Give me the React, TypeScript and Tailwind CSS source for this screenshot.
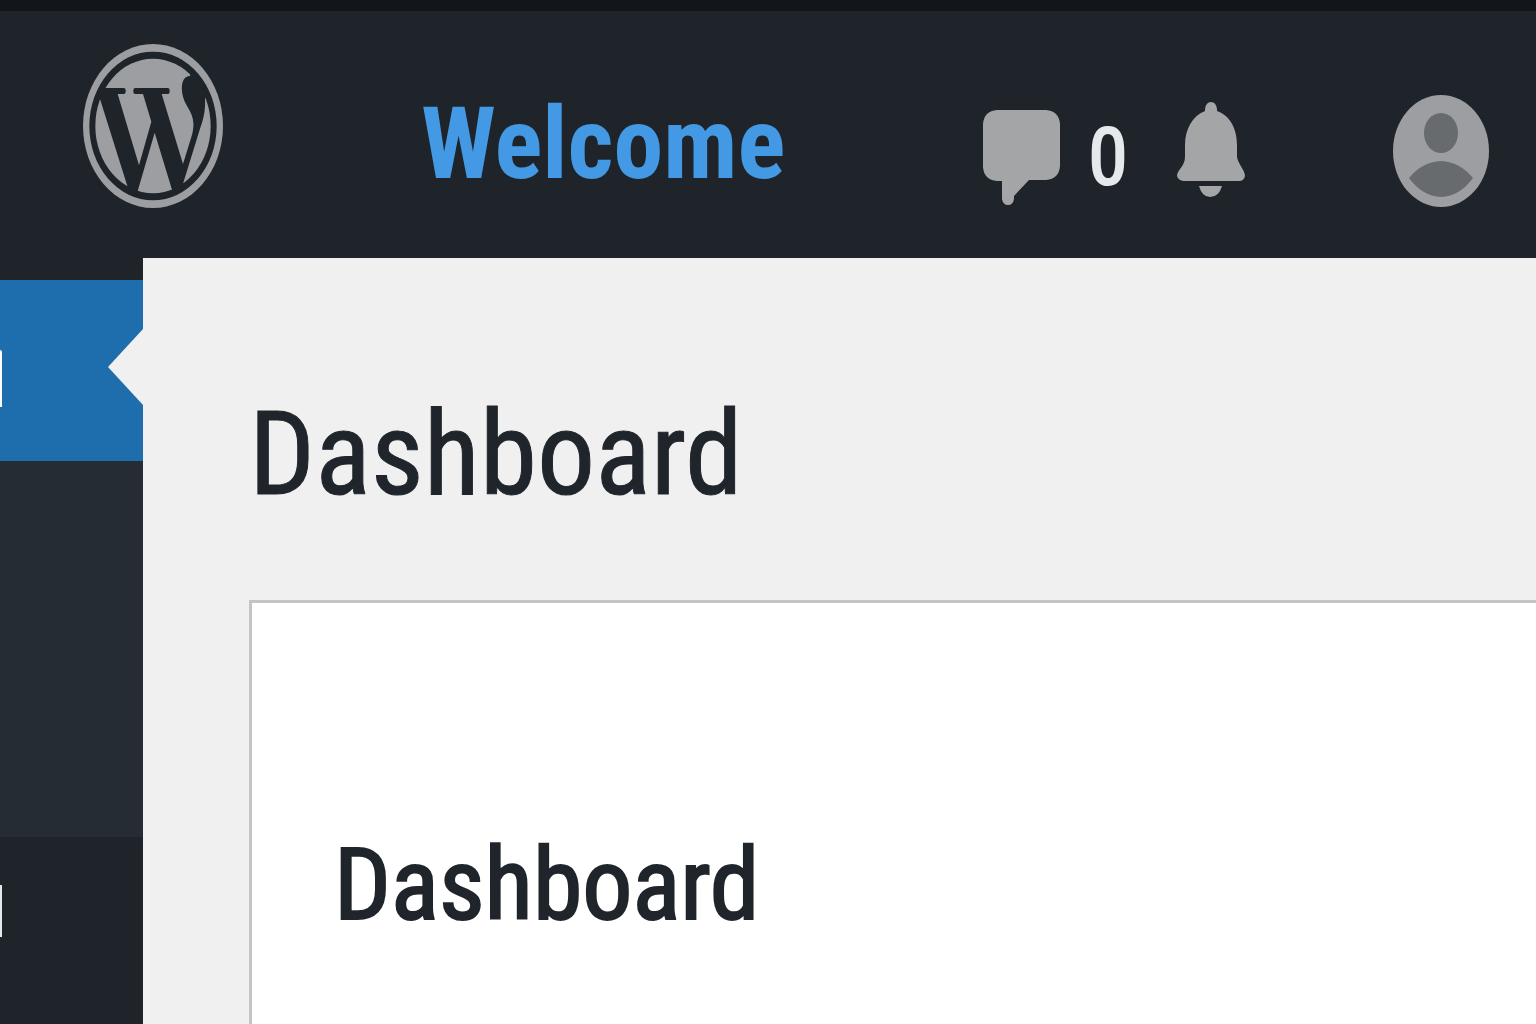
import React from 'react';

const fontStack = "font-['Roboto_Condensed','Roboto','Liberation_Sans',sans-serif]";

function WordPressLogo() {
    return (
        <svg viewBox="40 42 420 492" preserveAspectRatio="none" className="w-[140px] h-[164px]" aria-hidden="true">
            <defs>
                <clipPath id="logo-inner">
                    <ellipse cx="250" cy="288" rx="184" ry="214" />
                </clipPath>
            </defs>
            <ellipse cx="250" cy="288" rx="210" ry="246" fill="#9c9ea1" />
            <ellipse cx="250" cy="288" rx="191" ry="223" fill="#1f242a" />
            <ellipse cx="250" cy="288" rx="173" ry="202" fill="#9c9ea1" />
            <g clipPath="url(#logo-inner)" fill="#1f242a">
                <path d="M60 174H162Q168 174 168 180V186Q168 192 162 192H144L208 406L245 275L220 192H197Q191 192 191 186V180Q191 174 197 174H294Q300 174 300 180V186Q300 192 294 192H276L340 402L366 318C378 276 368 254 352 228C330 194 330 138 361 138L372 100H440L406 205C408 248 400 270 388 306L340 461L320 520L307 479L255 308L203 487L190 520L173 468L91 207L60 207Z" />
            </g>
        </svg>
    );
}

function CommentIcon() {
    return (
        <svg viewBox="0 0 77 97" className="w-[77px] h-[97px]" fill="#a3a5a7" aria-hidden="true">
            <path d="M14 1H63Q76 2 77 15V57Q76 70 63 71H46L31 87V90Q30 96 25 96Q20 96 19 90V72H14Q1 71 0 58V15Q1 2 14 1Z" />
        </svg>
    );
}

function BellIcon() {
    return (
        <svg viewBox="0 0 70 96" className="w-[70px] h-[96px]" fill="#a3a5a7" aria-hidden="true">
            <path d="M28 9V7Q29 0 34 0Q39 0 40 7V9C54 14 60 28 60 43V55C61 62 68 68 68 74Q67 79 62 79H6Q1 78 0 74C0 68 8 64 8 55V43C8 28 15 14 28 9Z" />
            <path d="M22 84H45Q42 95 33 95Q25 95 22 84Z" />
        </svg>
    );
}

function AvatarIcon() {
    return (
        <svg viewBox="0 0 96 112" className="w-[96px] h-[112px]" aria-hidden="true">
            <ellipse cx="48" cy="56" rx="48" ry="56" fill="#9c9ea1" />
            <ellipse cx="48" cy="38" rx="17" ry="20" fill="#686b6e" />
            <path d="M16 83Q29 67 48 66Q67 67 80 83Q67 101 48 102Q29 101 16 83Z" fill="#686b6e" />
        </svg>
    );
}

export default function App() {
    return (
        <div className={`min-h-screen flex flex-col overflow-hidden bg-[#1f242a] ${fontStack}`}>
            {/* Admin bar */}
            <header className="h-[258px] shrink-0 flex items-start border-t-[11px] border-[#12161b] pl-[83px] pr-[47px]">
                <a href="#" aria-label="WordPress" className="mt-[33px]">
                    <WordPressLogo />
                </a>
                <a
                    href="#"
                    className="mt-[71px] ml-[198px] text-[100px] leading-[124px] font-bold text-[#4399e4]"
                >
                    Welcome
                </a>
                <div className="ml-auto flex items-start">
                    <button type="button" aria-label="Comments" className="mt-[98px] flex items-start">
                        <CommentIcon />
                        <span className="ml-[27px] w-[42px] text-center text-[80px] leading-[96px] text-[#e6e9eb] [-webkit-text-stroke:2px_#e6e9eb]">
                            0
                        </span>
                    </button>
                    <button type="button" aria-label="Notifications" className="mt-[91px] ml-[48px]">
                        <BellIcon />
                    </button>
                    <button type="button" aria-label="Account" className="mt-[84px] ml-[146px]">
                        <AvatarIcon />
                    </button>
                </div>
            </header>

            <div className="flex flex-1">
                {/* Sidebar, mostly scrolled out to the left */}
                <nav className="w-[143px] shrink-0 flex flex-col pt-[22px]">
                    <a href="#" aria-label="Dashboard" className="h-[181px] flex items-center justify-between bg-[#1e6dac]">
                        <span className="mt-4 w-[2px] h-[57px] rounded-tr-sm bg-white" />
                        <svg viewBox="0 0 35 76" className="mb-2 w-[35px] h-[76px]" fill="#f0f0f1" aria-hidden="true">
                            <path d="M35 0V76L0 38Z" />
                        </svg>
                    </a>
                    <div className="h-[376px] bg-[#262c34]" />
                    <a href="#" aria-label="Posts" className="pt-12 pb-20">
                        <span className="block w-[2px] h-[52px] bg-[#e6e9eb]" />
                    </a>
                </nav>

                <main className="flex-1 min-w-0 flex flex-col bg-[#f0f0f1] text-[#1f252b]">
                    <h1 className="mt-[124px] ml-[106px] text-[116px] leading-[144px] [-webkit-text-stroke:1px_#1f252b]">
                        Dashboard
                    </h1>
                    <section className="mt-[74px] ml-[106px] flex-1 border-t-[3px] border-l-[3px] border-[#c3c4c7] bg-white">
                        <h2 className="mt-[220px] ml-[82px] text-[100px] leading-[124px] [-webkit-text-stroke:2px_#1f252b]">
                            Dashboard
                        </h2>
                    </section>
                </main>
            </div>
        </div>
    );
}
